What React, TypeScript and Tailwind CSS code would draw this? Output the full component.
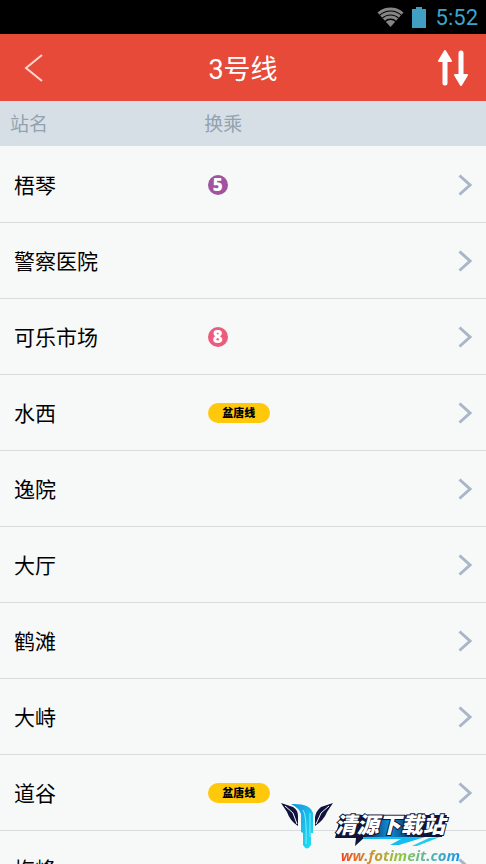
import { useState } from "react";

type Station = { name: string; transfer?: { kind: "dot" | "pill"; label: string; style: string } };

const STATIONS: Station[] = [
  { name: "梧琴", transfer: { kind: "dot", label: "5", style: "bg-[#a0549f]" } },
  { name: "警察医院" },
  { name: "可乐市场", transfer: { kind: "dot", label: "8", style: "bg-[#ec5a7d]" } },
  { name: "水西", transfer: { kind: "pill", label: "盆唐线", style: "bg-[#ffc80a]" } },
  { name: "逸院" },
  { name: "大厅" },
  { name: "鹤滩" },
  { name: "大峙" },
  { name: "道谷", transfer: { kind: "pill", label: "盆唐线", style: "bg-[#ffc80a]" } },
  { name: "梅峰" },
];

function StatusBar() {
  return (
    <div className="flex h-[34px] shrink-0 items-center justify-end bg-black pr-2 font-[Roboto,sans-serif] text-[22px] text-[#3ba5cd]">
      <svg className="mr-2 h-5 w-[27px]" viewBox="0 0 27 20" aria-label="Wi-Fi">
        <clipPath id="fan"><path d="M0 5Q13.500-5 27 5L13.500 20Z" /></clipPath>
        <g clipPath="url(#fan)" fill="none" stroke="#858585" strokeWidth="3">
          <circle cx="13.500" cy="20" r="18" />
          <circle cx="13.500" cy="20" r="14" />
          <circle cx="13.500" cy="20" r="10" />
          <circle cx="13.500" cy="20" r="3.500" strokeWidth="7" />
        </g>
      </svg>
      <svg className="mr-2.5 h-[21px] w-3.5" viewBox="0 0 14 21" aria-label="Battery">
        <path d="M4 0h6v2h4v19H0V2h4z" fill="#419fc4" />
      </svg>
      <time>5:52</time>
    </div>
  );
}

function StationRow({ name, transfer }: Station) {
  return (
    <li>
      <button type="button" className="flex h-[76px] w-full items-center border-b border-[#d8dcdf] px-3.5 text-left">
        <span className="w-5/12 shrink-0 pt-0.5 text-[21px] leading-8 text-black">{name}</span>
        <span className="flex flex-1 pl-[3px]">
          {transfer?.kind === "dot" && (
            <span className={"flex size-5 items-center justify-center rounded-full font-['Open_Sans',sans-serif] text-[17px] leading-5 font-extrabold text-white " + transfer.style}>
              {transfer.label}
            </span>
          )}
          {transfer?.kind === "pill" && (
            <span className={"flex h-5 w-[62px] items-center justify-center rounded-full pt-0.5 text-[11px] leading-5 font-black text-black " + transfer.style}>
              {transfer.label}
            </span>
          )}
        </span>
        <svg className="h-[22px] w-3.5" viewBox="0 0 14 22" fill="none" stroke="#a9b5c8" strokeWidth="3" aria-hidden="true">
          <path d="M1.500 1.500L12 11L1.500 20.500" />
        </svg>
      </button>
    </li>
  );
}

function Watermark() {
  return (
    <div className="pointer-events-none absolute right-[26px] bottom-0 flex items-start">
      <svg className="h-[62px] w-[52px]" viewBox="0 0 52 62" aria-hidden="true">
        <defs>
          <linearGradient id="stem" x1="0" y1="0" x2="1" y2="1">
            <stop offset="0" stopColor="#168fe0" />
            <stop offset="1" stopColor="#21e4f4" />
          </linearGradient>
        </defs>
        <path d="M0 1L12 5Q17 8 17 14V24Q9 19 6 10Z" fill="#11133c" />
        <path d="M52 1L40 5Q35 9 34 15V24Q43 18 46 10Z" fill="#11133c" />
        <path d="M4 4L12 11L16 22M48 4L40 11L35 22" fill="none" stroke="#f6f9f9" strokeWidth="1" />
        <path d="M10 2Q29 1 32 11V31H30V43Q26 50 22 43V31L20 30V12Q18 6 10 2Z" fill="url(#stem)" />
        <path d="M22 8Q26 13 25 42M29 11V35" fill="none" stroke="#7aeefb" strokeWidth="1" />
      </svg>
      <div className="flex flex-col items-start">
        <div className="relative mt-2 h-9">
          <svg className="absolute top-0 left-0 h-10 w-[116px]" viewBox="0 0 116 40" aria-hidden="true">
            <defs>
              <linearGradient id="plate">
                <stop offset="0.25" stopColor="#101436" />
                <stop offset="0.48" stopColor="#0b8fdc" />
                <stop offset="0.75" stopColor="#101436" />
              </linearGradient>
            </defs>
            <path d="M8 5H114L109 27H32L22 36L23 28H2Z" fill="url(#plate)" />
            <path d="M30 27H92L66 35H57L68 29H30Z" fill="#14bdf0" />
            <path d="M107 27L84 36H79L96 28Z" fill="#22cbed" />
          </svg>
          <span className="relative block pl-0.5 text-[22px] leading-8 font-black text-white italic [-webkit-text-stroke:2px_#101436] [paint-order:stroke_fill]">清源下载站</span>
        </div>
        <span className="ml-2 bg-linear-to-r from-[#f1401f] via-[#8cc63c] to-[#0795f0] bg-clip-text font-['Open_Sans',sans-serif] text-[15px] leading-[18px] font-bold text-transparent italic">ww.fotimeit.com</span>
      </div>
    </div>
  );
}

export default function App() {
  const [reversed, setReversed] = useState(false);
  const stations = reversed ? [...STATIONS].reverse() : STATIONS;
  return (
    <div className="relative flex h-screen flex-col overflow-hidden bg-[#f7f9f9] font-[Roboto,'Noto_Sans_CJK_SC',sans-serif]">
      <StatusBar />
      <header className="flex h-[67px] shrink-0 items-center justify-between bg-[#e84a3a] text-white">
        <button type="button" aria-label="返回" className="flex h-full w-20 items-center pl-6">
          <svg className="h-7 w-5" viewBox="0 0 20 28" fill="none" stroke="#ffd6d0" strokeWidth="2">
            <path d="M18 1L2 14L18 27" />
          </svg>
        </button>
        <h1 className="pt-1 text-[27px] leading-10">3号线</h1>
        <button type="button" aria-label="反向" onClick={() => setReversed(!reversed)} className="flex h-full w-20 items-center justify-end pr-[17px]">
          <svg className="h-9 w-8" viewBox="0 0 32 36" fill="#fff" stroke="#fff" strokeLinejoin="round" strokeLinecap="round">
            <path d="M8 33V10M24 3V26" strokeWidth="5" />
            <path d="M8 1L14 11H2ZM24 35L18 25H30Z" strokeWidth="2" />
          </svg>
        </button>
      </header>
      <div className="flex h-[45px] shrink-0 items-center bg-[#d7dfe6] px-2.5 pt-1 text-[19px] text-[#92a2b0]">
        <span className="w-5/12">站名</span>
        <span>换乘</span>
      </div>
      <ul className="min-h-0 flex-1 overflow-y-auto pt-px [scrollbar-width:none]">
        {stations.map((s) => (
          <StationRow key={s.name} {...s} />
        ))}
      </ul>
      <Watermark />
    </div>
  );
}
